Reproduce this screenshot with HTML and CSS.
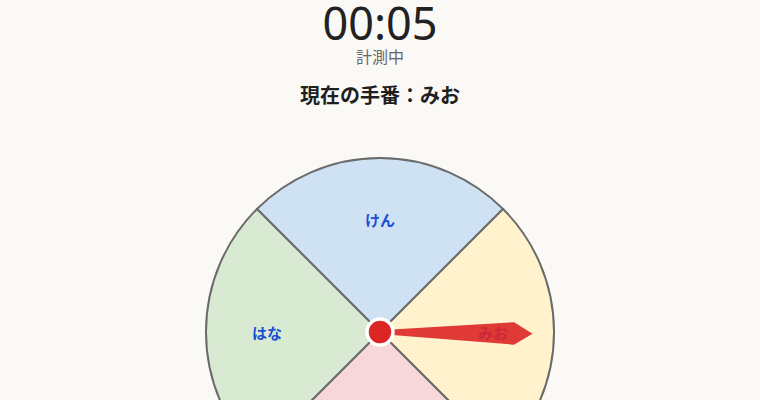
FILE: index.html
```html
<!DOCTYPE html>
<html lang="ja">
<head>
<meta charset="utf-8">
<title>ルーレット</title>
<link rel="stylesheet" href="styles.css">
</head>
<body>
<main class="app">
  <div class="timer">00:05</div>
  <div class="status">計測中</div>
  <div class="turn">現在の手番：みお</div>
  <div class="wheel">
    <svg width="360" height="360" viewBox="0 0 360 360">
      <g stroke="#6b6b6b" stroke-width="2" stroke-linejoin="round">
        <path d="M180 180 L56.96 56.96 A174 174 0 0 1 303.04 56.96 Z" fill="#cfe2f3"/>
        <path d="M180 180 L303.04 56.96 A174 174 0 0 1 303.04 303.04 Z" fill="#fff2cc"/>
        <path d="M180 180 L303.04 303.04 A174 174 0 0 1 56.96 303.04 Z" fill="#f8d7da"/>
        <path d="M180 180 L56.96 303.04 A174 174 0 0 1 56.96 56.96 Z" fill="#d9ead3"/>
      </g>
      <g class="label">
        <text x="180" y="67" text-anchor="middle" dominant-baseline="central">けん</text>
        <text x="293" y="180" text-anchor="middle" dominant-baseline="central">みお</text>
        <text x="180" y="293" text-anchor="middle" dominant-baseline="central">そら</text>
        <text x="67" y="180" text-anchor="middle" dominant-baseline="central">はな</text>
      </g>
      <g transform="translate(180 180) rotate(0.5)">
        <polygon points="12,-2.5 134,-11 152.5,0.5 134,11.5 12,3" fill="#dc2626" opacity="0.9"/>
        <circle cx="0" cy="0" r="13" fill="#dc2626" stroke="#ffffff" stroke-width="3.5"/>
      </g>
    </svg>
  </div>
</main>
</body>
</html>
```

FILE: styles.css
```css
html, body {
  margin: 0;
  padding: 0;
  background: #faf9f6;
}
body {
  font-family: "Noto Sans", "Noto Sans CJK JP", sans-serif;
  color: #222222;
}
.app {
  display: flex;
  flex-direction: column;
  align-items: center;
}
.timer {
  font-size: 45px;
  line-height: 45px;
  font-weight: 400;
  color: #222222;
}
.status {
  font-family: "Noto Sans CJK JP", sans-serif;
  font-size: 16px;
  line-height: 22px;
  color: #666666;
}
.turn {
  font-family: "Noto Sans CJK JP", sans-serif;
  margin-top: 14px;
  font-size: 20px;
  line-height: 28px;
  font-weight: 700;
  color: #1f1f1f;
}
.wheel {
  margin-top: 43px;
  width: 360px;
  height: 360px;
}
.wheel svg {
  display: block;
}
.label text {
  font-family: "Noto Sans CJK JP", sans-serif;
  font-size: 15px;
  font-weight: 700;
  fill: #1d4ed8;
}
```
